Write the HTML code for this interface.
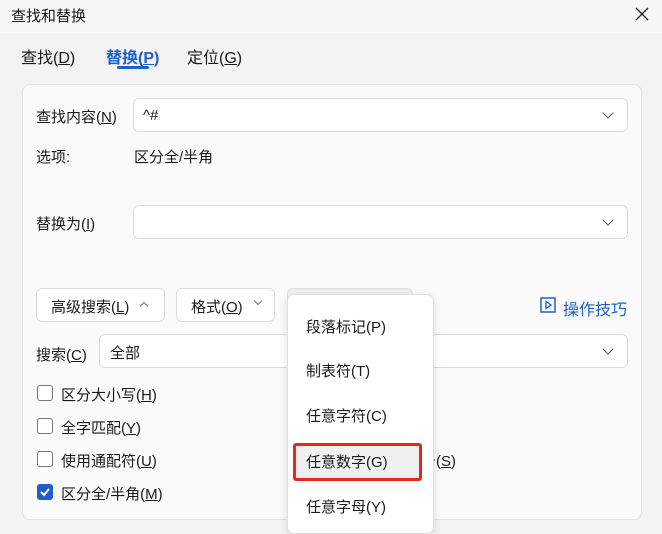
<!DOCTYPE html><html><head><meta charset="utf-8"><style>
*{margin:0;padding:0;box-sizing:border-box}
body{width:662px;height:531px;overflow:hidden;background:#f3f3f3;font-family:"Liberation Sans","Noto Sans CJK SC",sans-serif;font-size:15px;color:#1a1a1a;position:relative}
.a{position:absolute;white-space:nowrap}
u{text-decoration:underline}
.box{position:absolute;background:#fff;border:1px solid #dcdcdc;border-radius:6px}
.chev{position:absolute;width:8px;height:8px;border-right:1.5px solid #555;border-bottom:1.5px solid #555;transform:rotate(45deg)}
.cb{position:absolute;width:16px;height:16px;border:1px solid #777;border-radius:3px;background:#fff}
</style></head><body>
<div class="a" style="left:0;top:0;width:662px;height:33px;background:#f7f7f7"></div>
<div class="a" style="left:11px;top:5px;font-size:15px">查找和替换</div>
<svg class="a" style="left:635px;top:7px" width="14" height="14"><path d="M1 1L13 13M13 1L1 13" stroke="#222" stroke-width="1.3"/></svg>
<div class="a" style="left:21px;top:44px;font-size:16px">查找(<u>D</u>)</div>
<div class="a" style="left:106px;top:44px;font-size:16px;color:#1f5fc8;font-weight:bold">替换(<u>P</u>)</div>
<div class="a" style="left:117px;top:66px;width:32px;height:3px;background:#1f5fc8;border-radius:2px"></div>
<div class="a" style="left:187px;top:44px;font-size:16px">定位(<u>G</u>)</div>
<div class="a" style="left:22px;top:84px;width:620px;height:436px;background:#fafafa;border:1px solid #e2e2e2;border-radius:8px"></div>
<div class="a" style="left:36px;top:106px">查找内容(<u>N</u>)</div>
<div class="box" style="left:133px;top:98px;width:495px;height:34px"></div>
<div class="a" style="left:143px;top:107px">^#</div>
<div class="chev" style="left:604px;top:109px"></div>
<div class="a" style="left:36px;top:146px">选项:</div>
<div class="a" style="left:134px;top:146px">区分全/半角</div>
<div class="a" style="left:36px;top:213px">替换为(<u>I</u>)</div>
<div class="box" style="left:133px;top:205px;width:495px;height:34px"></div>
<div class="chev" style="left:604px;top:216px"></div>
<div class="box" style="left:36px;top:288px;width:129px;height:34px"></div>
<div class="a" style="left:51px;top:296px">高级搜索(<u>L</u>)</div>
<div class="chev" style="left:141px;top:303px;transform:rotate(225deg);width:6px;height:6px;border-color:#777"></div>
<div class="box" style="left:176px;top:288px;width:99px;height:34px"></div>
<div class="a" style="left:191px;top:296px">格式(<u>O</u>)</div>
<div class="chev" style="left:255px;top:298px;width:6px;height:6px;border-color:#777"></div>
<div class="box" style="left:287px;top:288px;width:126px;height:34px;background:#f0f0f0"></div>
<svg class="a" style="left:540px;top:297px" width="16" height="16"><rect x="1" y="1" width="14" height="14" fill="none" stroke="#1f5fc8" stroke-width="1.5"/><path d="M6 4.5 L11 8 L6 11.5Z" fill="none" stroke="#1f5fc8" stroke-width="1.3"/></svg>
<div class="a" style="left:563px;top:296px;font-size:16px;color:#1f5fc8">操作技巧</div>
<div class="a" style="left:36px;top:344px">搜索(<u>C</u>)</div>
<div class="box" style="left:99px;top:334px;width:529px;height:34px"></div>
<div class="a" style="left:110px;top:342px">全部</div>
<div class="chev" style="left:604px;top:345px"></div>
<div class="cb" style="left:37px;top:385px"></div><div class="a" style="left:61px;top:384px">区分大小写(<u>H</u>)</div>
<div class="cb" style="left:37px;top:418px"></div><div class="a" style="left:61px;top:417px">全字匹配(<u>Y</u>)</div>
<div class="cb" style="left:37px;top:451px"></div><div class="a" style="left:61px;top:450px">使用通配符(<u>U</u>)</div>
<div class="cb" style="left:37px;top:484px;background:#1f5fc8;border-color:#1f5fc8"></div>
<svg class="a" style="left:39px;top:486px" width="12" height="12"><path d="M2 6 L5 9 L10 3" fill="none" stroke="#fff" stroke-width="2"/></svg>
<div class="a" style="left:61px;top:483px">区分全/半角(<u>M</u>)</div>
<div class="a" style="left:428px;top:384px">)</div>
<div class="a" style="left:428px;top:417px">)</div>
<div class="a" style="left:421px;top:450px">号(<u>S</u>)</div>
<div class="a" style="left:428px;top:483px">)</div>
<div class="a" style="left:287px;top:294px;width:147px;height:240px;background:#fff;border:1px solid #e0e0e0;border-radius:7px;box-shadow:0 2px 8px rgba(0,0,0,.12)"></div>
<div class="a" style="left:293px;top:443px;width:129px;height:38px;background:#f0f0f0;border:3px solid #e8281e;border-radius:3px"></div>
<div class="a" style="left:306px;top:316px">段落标记(P)</div>
<div class="a" style="left:306px;top:360px">制表符(T)</div>
<div class="a" style="left:306px;top:405px">任意字符(C)</div>
<div class="a" style="left:306px;top:451px">任意数字(G)</div>
<div class="a" style="left:306px;top:496px">任意字母(Y)</div>
</body></html>
